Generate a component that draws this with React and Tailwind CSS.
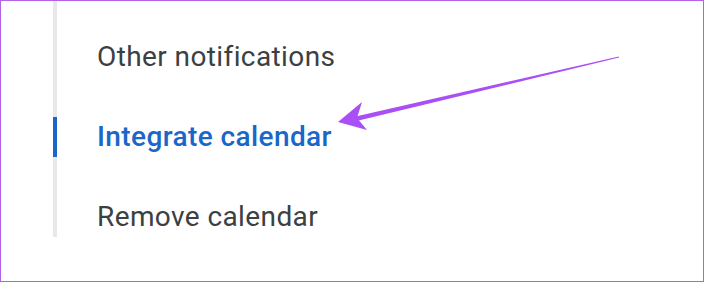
export default function App() {
  return (
    <div className="relative w-[704px] h-[282px] bg-white border border-[#b362e6] overflow-hidden" style={{ fontFamily: "Roboto, 'Liberation Sans', sans-serif" }}>
      <div className="ml-[52px] w-[600px] h-[236px] border-l-4 border-[#e8e8e8] pt-[36px] flex flex-col gap-[40px]">
        <div className="h-10 flex items-center pl-10 text-[28px] tracking-[0.4px] text-[#3c4043] -ml-1 border-l-4 border-transparent">Other notifications</div>
        <div className="h-10 flex items-center pl-10 text-[28px] tracking-[0.4px] font-medium text-[#1a66c9] -ml-1 border-l-4 border-[#1a66c9]">Integrate calendar</div>
        <div className="h-10 flex items-center pl-10 text-[28px] tracking-[0.4px] text-[#3c4043] -ml-1 border-l-4 border-transparent">Remove calendar</div>
      </div>
      <svg className="absolute left-[-1px] top-[-1px]" width="704" height="282" viewBox="0 0 704 282">
        <polygon points="619.1,57.6 618.9,56.4 354.5,116.8 355.5,121.2" fill="#a94ff5" />
        <polygon points="338,122 362,102 357,118 367,130" fill="#a94ff5" />
      </svg>
    </div>
  );
}
